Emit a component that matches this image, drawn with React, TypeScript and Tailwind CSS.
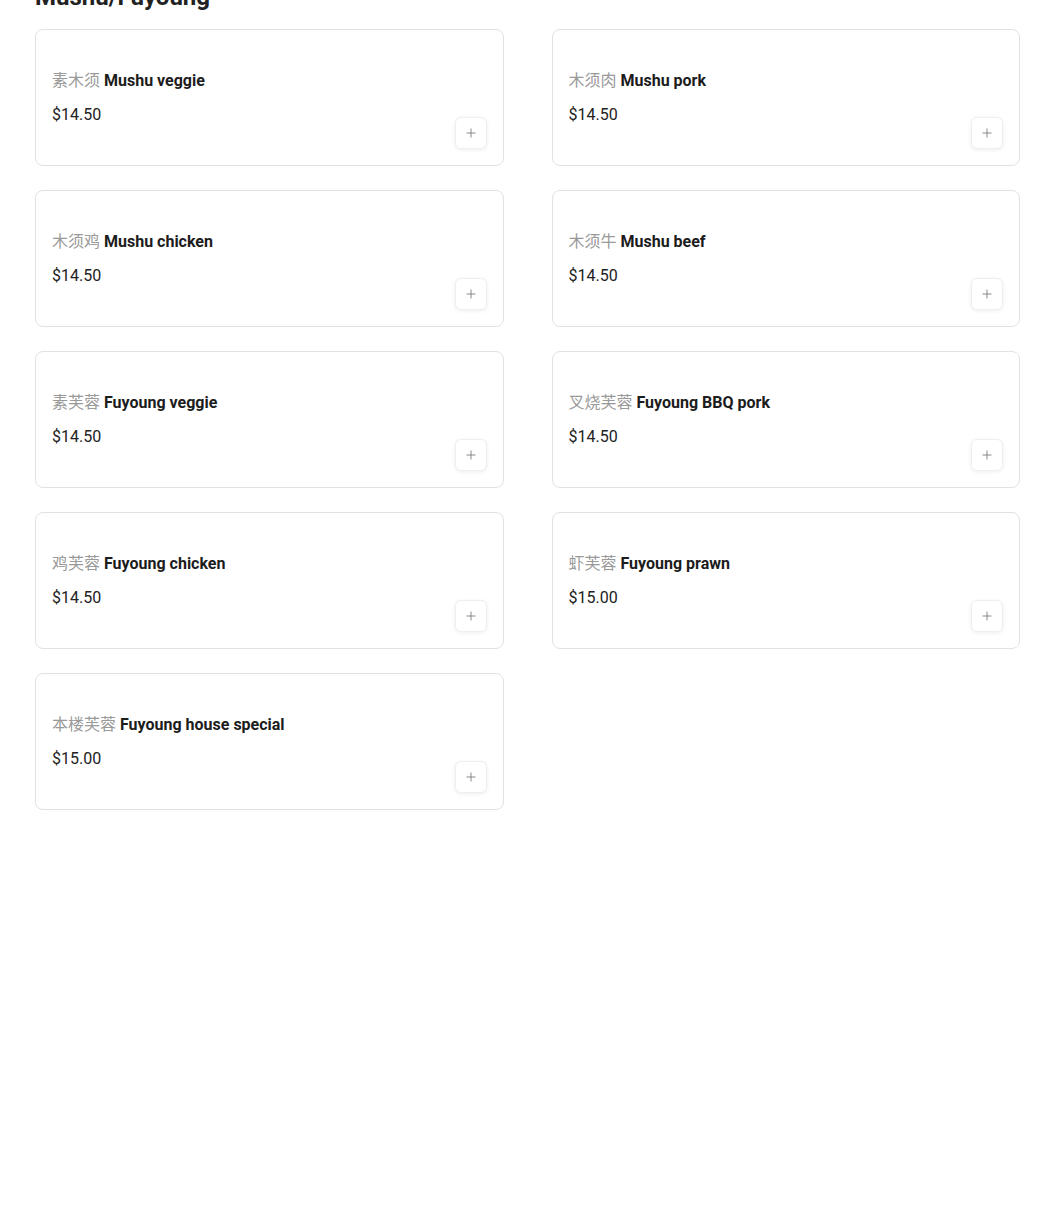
import { Plus } from 'lucide-react';

const items = [
  { zh: '素木须', name: 'Mushu veggie', price: '14.50' },
  { zh: '木须肉', name: 'Mushu pork', price: '14.50' },
  { zh: '木须鸡', name: 'Mushu chicken', price: '14.50' },
  { zh: '木须牛', name: 'Mushu beef', price: '14.50' },
  { zh: '素芙蓉', name: 'Fuyoung veggie', price: '14.50' },
  { zh: '叉烧芙蓉', name: 'Fuyoung BBQ pork', price: '14.50' },
  { zh: '鸡芙蓉', name: 'Fuyoung chicken', price: '14.50' },
  { zh: '虾芙蓉', name: 'Fuyoung prawn', price: '15.00' },
  { zh: '本楼芙蓉', name: 'Fuyoung house special', price: '15.00' },
];

function MenuCard({ zh, name, price }: { zh: string; name: string; price: string }) {
  return (
    <div className="flex h-[137px] justify-between rounded-lg border border-[#e2e2e2] bg-white p-4">
      <div className="flex flex-col justify-center">
        <p className="text-base leading-6 font-bold text-[#1c1c1c]">
          <span className="font-normal text-[#9a9a9a]">{zh}</span> {name}
        </p>
        <p className="mt-2.5 text-base leading-6 text-[#222]">${price}</p>
      </div>
      <button className="flex h-8 w-8 items-center justify-center self-end rounded-md border border-[#efefef] bg-white shadow-[0_1px_4px_rgba(0,0,0,0.07)]">
        <Plus size={14} strokeWidth={1.5} className="text-[#7a7a7a]" />
      </button>
    </div>
  );
}

export default function App() {
  return (
    <div
      className="min-h-[1218px] bg-white pr-[30px] pl-[35px]"
      style={{ fontFamily: 'Roboto, "Noto Sans CJK SC", sans-serif' }}
    >
      <h2 className="-mt-[19px] text-2xl leading-8 font-bold text-[#222]">Mushu/Fuyoung</h2>
      <div className="mt-4 grid grid-cols-2 gap-x-12 gap-y-6">
        {items.map((item) => (
          <MenuCard key={item.name} {...item} />
        ))}
      </div>
    </div>
  );
}
